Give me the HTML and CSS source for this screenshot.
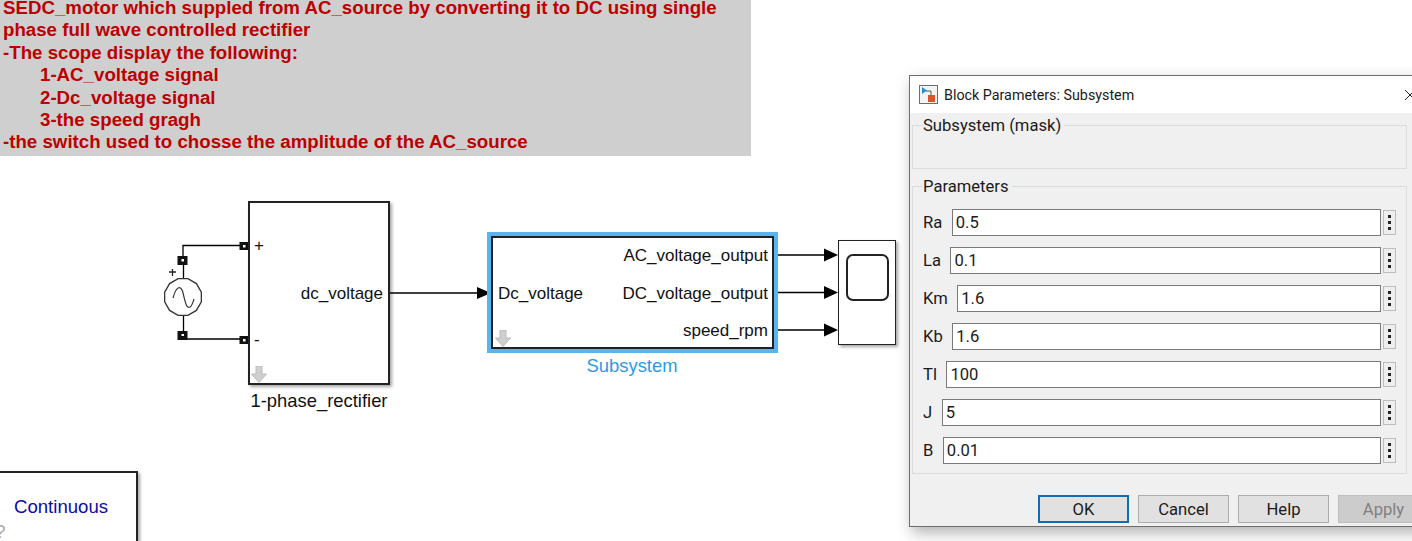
FILE: index.html
```html
<!doctype html>
<html>
<head>
<meta charset=utf-8>
<title>Block Parameters: Subsystem</title>
<link rel="stylesheet" href="styles.css">
</head>

<body>

<main class="canvas">

  <section class="note">
    <p class="first">SEDC_motor which suppled from AC_source by converting it to DC using single</p>
    <p>phase full wave controlled rectifier</p>
    <p>-The scope display the following:</p>
    <p class="indent">1-AC_voltage signal</p>
    <p class="indent">2-Dc_voltage signal</p>
    <p class="indent">3-the speed gragh</p>
    <p>-the switch used to chosse the amplitude of the AC_source</p>
  </section>

  <!-- wires, arrow heads and the AC source -->
  <svg class="wires" width="1412" height="541" viewBox="0 0 1412 541">
    <g fill="none" stroke="#000" stroke-width="1.3">
      <path d="M183 258V245.5H241"/>
      <path d="M183 334V339H241"/>
      <path d="M183.500 263V279M183.500 315V332"/>
      <path d="M389 293H478"/>
      <path d="M774 255H825M774 292.500H825M774 330H825"/>
    </g>
    <path class="plus" d="M169 272H176M172.500 269V276"/>
    <polygon class="source" points="201.350,292.100 201.350,301.900 196.400,310.400 187.900,315.350 178.100,315.350 169.600,310.400 164.650,301.900 164.650,292.100 169.600,283.600 178.100,278.650 187.900,278.650 196.400,283.600"/>
    <path class="sine" d="M173 298C176 287 180 285 182.500 291C185 300 186 309 190 307C192 306 193 302 194 299"/>
    <g fill="#000">
      <polygon points="477,287 491,293 477,299"/>
      <polygon points="824,248.500 838,255 824,261.500"/>
      <polygon points="824,286 838,292.500 824,299"/>
      <polygon points="824,323.500 838,330 824,336.500"/>
    </g>
    <g class="port">
      <rect x="177.500" y="256" width="10" height="9"/>
      <rect x="177.500" y="331" width="10" height="9"/>
      <rect x="239.500" y="242" width="9" height="8"/>
      <rect x="239.500" y="336" width="9" height="8"/>
    </g>
    <g fill="#fff">
      <rect x="181.500" y="259" width="2.500" height="2.500"/>
      <rect x="181.500" y="334" width="2.500" height="2"/>
      <rect x="243" y="245" width="2.500" height="2.500"/>
      <rect x="243" y="339" width="2.500" height="2.500"/>
    </g>
  </svg>

  <div class="block rectifier">
    <span class="port-plus">+</span>
    <span class="port-minus">-</span>
    <span class="out-label">dc_voltage</span>
    <svg class="down" width="16" height="17" viewBox="0 0 16 17"><path d="M5 0H11V8H15.500L8 16.500L.5 8H5Z"/></svg>
  </div>
  <div class="caption rectifier-name">1-phase_rectifier</div>

  <div class="block subsystem">
    <div class="sub-in">Dc_voltage</div>
    <div class="sub-out">
      <span>AC_voltage_output</span>
      <span>DC_voltage_output</span>
      <span>speed_rpm</span>
    </div>
    <svg class="down" width="16" height="17" viewBox="0 0 16 17"><path d="M5 0H11V8H15.500L8 16.500L.5 8H5Z"/></svg>
  </div>
  <div class="caption subsystem-name">Subsystem</div>

  <div class="block scope"><div class="screen"></div></div>

  <div class="block solver">
    <span>Continuous</span>
    <i>?</i>
  </div>

  <section class="dialog">
    <header class="titlebar">
      <svg class="appicon" width="19" height="19" viewBox="0 0 19 19">
        <rect x=".5" y=".5" width="18" height="18" fill="#f4f4f4" stroke="#6d6d6d"/>
        <path d="M7 6H12V11" fill="none" stroke="#555"/>
        <polygon points="3,2 3,9 8,5.500" fill="#2a8fd8"/>
        <rect x="9" y="10" width="7" height="7" fill="#d9562b"/>
      </svg>
      <span class="title">Block Parameters: Subsystem</span>
      <svg class="close" width="10" height="10" viewBox="0 0 10 10"><path d="M0 0L10 10M10 0L0 10" stroke="#222" fill="none"/></svg>
    </header>

    <div class="panel">
      <fieldset class="group mask">
        <legend>Subsystem (mask)</legend>
      </fieldset>

      <fieldset class="group params">
        <legend>Parameters</legend>
        <div class="row"><label>Ra</label><input value="0.5"><button class="more"></button></div>
        <div class="row"><label>La</label><input value="0.1"><button class="more"></button></div>
        <div class="row"><label>Km</label><input value="1.6"><button class="more"></button></div>
        <div class="row"><label>Kb</label><input value="1.6"><button class="more"></button></div>
        <div class="row"><label>Tl</label><input value="100"><button class="more"></button></div>
        <div class="row"><label>J</label><input value="5"><button class="more"></button></div>
        <div class="row"><label>B</label><input value="0.01"><button class="more"></button></div>
      </fieldset>

      <footer class="actions">
        <button class="btn default">OK</button>
        <button class="btn">Cancel</button>
        <button class="btn">Help</button>
        <button class="btn off">Apply</button>
      </footer>
    </div>
  </section>

</main>

</body>
</html>
```

FILE: styles.css
```css
html, body {
  margin: 0;
  padding: 0;
  height: 541px;
  overflow: hidden;
  background: #fff;
}

.canvas {
  position: relative;
  width: 1412px;
  height: 541px;
  overflow: hidden;
  font-family: "Liberation Sans", Arial, sans-serif;
  color: #111;
}

/* annotation */
.note {
  position: absolute;
  left: 0;
  top: 0;
  width: 748px;
  height: 156px;
  padding-left: 3px;
  background: #cfcfcf;
  color: #bd0000;
  font-weight: bold;
  font-size: 18.700px;
  line-height: 22.400px;
}

.note p {
  margin: 0;
}

.note .first {
  line-height: 16.400px;
  margin-bottom: 3px;
}

.note .indent {
  padding-left: 37px;
}

.wires {
  position: absolute;
  left: 0;
  top: 0;
}

.plus {
  stroke: #222;
  stroke-width: 1.300;
  fill: none;
}

.source {
  fill: #fff;
  stroke: #333;
  stroke-width: 1.300;
}

.sine {
  fill: none;
  stroke: #333;
  stroke-width: 1.200;
}

.port rect {
  fill: #111;
}

/* blocks */
.block {
  position: absolute;
  box-sizing: border-box;
  background: #fff;
  border: 2px solid #222;
  box-shadow: 2px 2px 3px rgba(0, 0, 0, .35);
  font-size: 17px;
}

.down {
  position: absolute;
  left: 1px;
  bottom: 0;
  fill: #cfcfcf;
  stroke: #bbb;
}

.rectifier {
  left: 248px;
  top: 201px;
  width: 142px;
  height: 184px;
}

.port-plus, .port-minus {
  position: absolute;
  left: 4px;
  font-size: 17px;
}

.port-plus { top: 33px; }
.port-minus { top: 127px; }

.out-label {
  position: absolute;
  right: 5px;
  top: 81px;
}

.caption {
  position: absolute;
  font-size: 18.400px;
  text-align: center;
}

.rectifier-name {
  left: 239px;
  top: 390px;
  width: 160px;
}

.subsystem {
  left: 491px;
  top: 236px;
  width: 283px;
  height: 113px;
  display: flex;
  justify-content: space-between;
  padding: 0 4px 0 5px;
  outline: 4px solid #5ab4f0;
  box-shadow: none;
}

.subsystem .down {
  left: 2px;
}

.sub-in {
  align-self: center;
  padding-top: 3px;
}

.sub-out {
  display: flex;
  flex-direction: column;
  align-items: flex-end;
  gap: 18px;
  padding-top: 8px;
}

.sub-out span:last-child {
  margin-top: -1px;
}

.subsystem-name {
  left: 552px;
  top: 355px;
  width: 160px;
  color: #2b9be8;
}

.scope {
  left: 838px;
  top: 240px;
  width: 58px;
  height: 105px;
  border-width: 1px;
  padding: 13px 7px 0;
}

.screen {
  box-sizing: border-box;
  height: 47px;
  width: 43px;
  border: 2px solid #222;
  border-radius: 7px;
}

.solver {
  left: -10px;
  top: 471px;
  width: 148px;
  height: 90px;
  overflow: hidden;
}

.solver span {
  position: absolute;
  left: 22px;
  top: 23px;
  font-size: 18.600px;
  color: #0b0ba8;
}

.solver i {
  position: absolute;
  left: 3px;
  top: 48px;
  font-style: normal;
  font-size: 19px;
  color: #aaa;
}

/* dialog */
.dialog {
  position: absolute;
  left: 909px;
  top: 75px;
  width: 530px;
  height: 450px;
  display: flex;
  flex-direction: column;
  border: 1px solid #6e6e6e;
  background: #f0f0f0;
  box-shadow: 3px 6px 14px rgba(0, 0, 0, .3);
  font-family: Roboto, "Noto Sans", sans-serif;
  font-size: 16.600px;
  color: #1a1a1a;
}

.titlebar {
  height: 37px;
  flex: none;
  background: #fff;
  display: flex;
  align-items: center;
  padding: 0 25px 0 9px;
}

.title {
  flex: 1;
  margin-left: 6px;
  font-size: 14.300px;
}

.panel {
  flex: 1;
  padding: 0 0 0 2px;
  display: flex;
  flex-direction: column;
}

.group {
  box-sizing: border-box;
  width: 495px;
  margin: 0;
  padding: 0 0 0 10px;
  border: 1px solid #dcdcdc;
}

.group legend {
  padding: 2px 3px 0 0;
  margin-left: 0;
  line-height: 20px;
}

.mask {
  height: 55px;
  margin-top: 1px;
}

.params {
  height: 299px;
  margin-top: 6px;
  padding-top: 6px;
}

.row {
  display: flex;
  align-items: center;
  height: 38px;
}

.row label {
  margin-right: 9.500px;
}

.row input {
  flex: 1;
  min-width: 0;
  box-sizing: border-box;
  height: 27px;
  padding: 0 3px;
  border: 1px solid #7a7a7a;
  border-radius: 0;
  background: #fff;
  font: inherit;
  color: inherit;
  outline: none;
}

.more {
  position: relative;
  box-sizing: border-box;
  width: 13px;
  height: 25px;
  margin: 0 10px 0 2px;
  padding: 0;
  background: #eee;
  border: 1px solid #bdbdbd;
}

.more::before {
  content: "";
  position: absolute;
  left: 4px;
  top: 10px;
  width: 3px;
  height: 3px;
  background: #222;
  box-shadow: 0 -6px #222, 0 6px #222;
}

.actions {
  display: flex;
  gap: 9px;
  padding: 21px 0 0 126px;
}

.btn {
  box-sizing: border-box;
  flex: none;
  width: 91px;
  height: 28px;
  padding: 0;
  background: #e1e1e1;
  border: 1px solid #adadad;
  font: inherit;
  color: inherit;
}

.btn.default {
  border: 2px solid #0f6cb5;
}

.btn.off {
  background: #cccccc;
  border-color: #bfbfbf;
  color: #808080;
}
```
